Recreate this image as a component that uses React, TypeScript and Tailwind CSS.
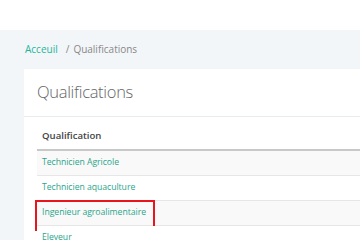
const rows = [
  "Technicien Agricole",
  "Technicien aquaculture",
  "Ingenieur agroalimentaire",
  "Eleveur",
];

export default function App() {
  return (
    <div
      className="w-[360px] h-[240px] overflow-hidden bg-white"
      style={{ fontFamily: '"Open Sans", "Noto Sans", sans-serif' }}
    >
      {/* top bar */}
      <div className="h-[30px] bg-white" />

      <div className="bg-[#f3f6f9] pl-[24px] h-[210px]">
        {/* Breadcrumb */}
        <div className="h-[39px] flex items-center pl-[1px] text-[10px] text-[#888]">
          <span className="text-[#1fb59a]">Acceuil</span>
          <span className="ml-[8px] mr-[4px]">/</span>
          <span>Qualifications</span>
        </div>

        {/* Card */}
        <div className="bg-white h-[171px]">
          <div className="h-[48px] border-b border-[#e7ecf1] flex items-center pl-[13px] pb-[1px]">
            <h1 className="text-[16.5px] font-light text-[#666] tracking-[-0.3px]">Qualifications</h1>
          </div>

          <div className="pl-[13px]">
            <div className="h-[34px] border-b-2 border-[#c8c8c8] flex items-end pl-[5px] pb-[6px]">
              <span className="text-[9.6px] font-semibold text-[#444]">Qualification</span>
            </div>
            {rows.map((r, i) => (
              <div
                key={r}
                className={`relative h-[25px] border-b border-[#e7e7e7] flex items-center pl-[5px] ${
                  i % 2 === 0 ? "bg-[#f9f9f9]" : "bg-white"
                }`}
              >
                <span className="text-[8.7px] tracking-[-0.05px] text-[#2aa58b]">{r}</span>
                {i === 2 && (
                  <div className="absolute -left-[2px] -top-[1px] w-[120px] h-[31px] border-2 border-[#e8141e]" />
                )}
              </div>
            ))}
          </div>
        </div>
      </div>
    </div>
  );
}
